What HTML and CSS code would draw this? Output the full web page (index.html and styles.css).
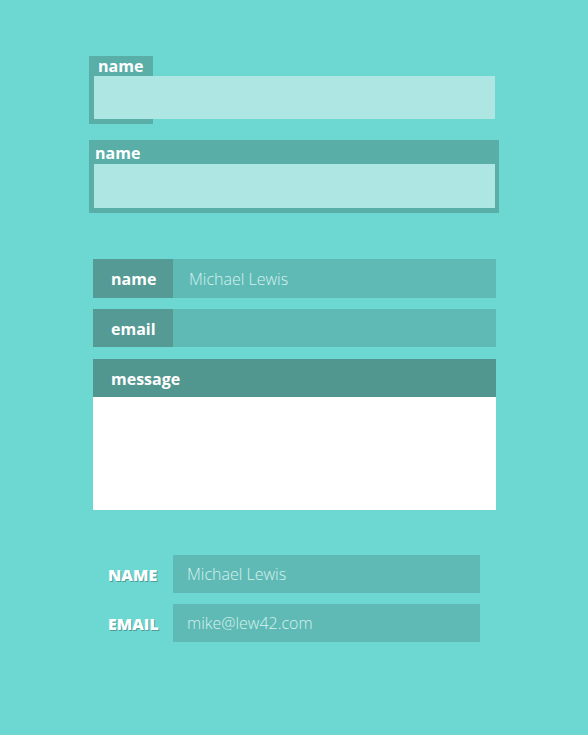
FILE: index.html
```html
<!DOCTYPE html>
<html>
<head>
<meta charset="utf-8">
<link rel="stylesheet" href="styles.css">
</head>
<body>
<main class="page">
  <section class="set set-tabs">
    <div class="tab-field">
      <span class="tab-label">name</span>
      <div class="tab-input"></div>
    </div>
    <div class="frame-field">
      <span class="frame-label">name</span>
      <div class="frame-input"></div>
    </div>
  </section>

  <section class="set set-rows">
    <div class="row">
      <span class="row-label">name</span>
      <span class="row-value">Michael Lewis</span>
    </div>
    <div class="row">
      <span class="row-label">email</span>
      <span class="row-value"></span>
    </div>
    <div class="msg">
      <div class="msg-head">message</div>
      <div class="msg-body"></div>
    </div>
  </section>

  <section class="set set-caps">
    <div class="cap-row">
      <span class="cap-label">NAME</span>
      <span class="cap-value">Michael Lewis</span>
    </div>
    <div class="cap-row">
      <span class="cap-label">EMAIL</span>
      <span class="cap-value">mike@lew42.com</span>
    </div>
  </section>
</main>
</body>
</html>
```

FILE: styles.css
```css
html, body {
  margin: 0;
  padding: 0;
  background: #6dd8d2;
  font-family: "Open Sans", "Liberation Sans", sans-serif;
}

.page {
  width: 588px;
  height: 735px;
  display: flex;
  flex-direction: column;
}

/* ---- section 1 ---- */
.set-tabs {
  margin: 56px 0 0 89px;
  display: flex;
  flex-direction: column;
  gap: 16px;
}

.tab-field {
  position: relative;
  width: 406px;
  display: flex;
  flex-direction: column;
  padding: 0 0 5px 5px;
  box-sizing: border-box;
}
.tab-field::before {
  content: "";
  position: absolute;
  left: 0;
  top: 0;
  width: 64px;
  bottom: 0;
  background: #59aea8;
}
.tab-label {
  position: relative;
  height: 20px;
  line-height: 21px;
  padding-left: 4px;
  color: #fff;
  font-weight: 700;
  font-size: 16px;
}
.tab-input {
  position: relative;
  height: 43px;
  background: #aee6e3;
}

.frame-field {
  width: 410px;
  background: #59aea8;
  padding: 0 4px 5px 5px;
  box-sizing: border-box;
  display: flex;
  flex-direction: column;
}
.frame-label {
  height: 24px;
  line-height: 27px;
  padding-left: 1px;
  color: #fff;
  font-weight: 700;
  font-size: 16px;
}
.frame-input {
  height: 44px;
  background: #aee6e3;
}

/* ---- section 2 ---- */
.set-rows {
  margin: 46px 0 0 93px;
  width: 403px;
  display: flex;
  flex-direction: column;
  gap: 11px;
}
.row {
  display: flex;
  height: 39px;
}
.row + .row {
  height: 38px;
}
.row-label {
  width: 80px;
  flex: none;
  background: #559a94;
  color: #fff;
  font-weight: 700;
  font-size: 16px;
  line-height: 41px;
  padding-left: 18px;
  box-sizing: border-box;
}
.row-value {
  flex: 1;
  background: #5fbab5;
  color: #d6f1ef;
  font-weight: 300;
  font-size: 16px;
  line-height: 41px;
  padding-left: 16px;
}
.msg {
  margin-top: 1px;
  display: flex;
  flex-direction: column;
}
.msg-head {
  height: 38px;
  line-height: 41px;
  background: #529690;
  color: #fff;
  font-weight: 700;
  font-size: 16px;
  padding-left: 18px;
}
.msg-body {
  height: 113px;
  background: #fff;
}

/* ---- section 3 ---- */
.set-caps {
  margin: 45px 0 0 93px;
  display: flex;
  flex-direction: column;
  gap: 11px;
}
.cap-row {
  display: flex;
  height: 38px;
}
.cap-label {
  width: 80px;
  padding-left: 15px;
  box-sizing: border-box;
  color: #fff;
  font-weight: 800;
  font-size: 16px;
  line-height: 41px;
  text-shadow: 1px 1px 0 #4a9e98;
}
.cap-value {
  width: 307px;
  background: #5fbab5;
  color: #d6f1ef;
  font-weight: 300;
  font-size: 16px;
  line-height: 39px;
  padding-left: 14px;
  box-sizing: border-box;
}
```
